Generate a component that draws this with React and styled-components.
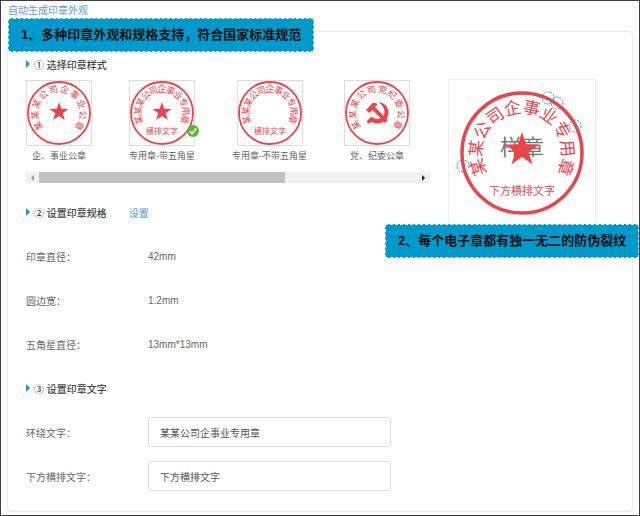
import { useState } from 'react';
import styled, { createGlobalStyle } from 'styled-components';

const RED = '#e9464c';
const CJK = '"Noto Sans CJK SC", sans-serif';

const styles = [
  { id: 'company', name: '企、事业公章', ring: '某某某公司企事业公章', spread: 122, emblem: 'star' },
  { id: 'special-star', name: '专用章-带五角星', ring: '某某某公司企事业专用章', spread: 106, emblem: 'star', bottom: '横排文字' },
  { id: 'special', name: '专用章-不带五角星', ring: '某某某公司企事业专用章', spread: 106, bottom: '横排文字' },
  { id: 'party', name: '党、纪委公章', ring: '某某某公司党纪委公章', spread: 120, emblem: 'party' },
];

const sizes = [
  { label: '印章直径：', value: '42mm' },
  { label: '圆边宽：', value: '1.2mm' },
  { label: '五角星直径：', value: '13mm*13mm' },
];

const starPoints = (cx, cy, r) =>
  Array.from({ length: 10 }, (_, i) => {
    const a = (i * Math.PI) / 5;
    const d = i % 2 ? r * 0.39 : r;
    return `${cx + d * Math.sin(a)},${cy - d * Math.cos(a)}`;
  }).join(' ');

// One text element, every glyph set on the circle and turned outwards
const RingText = ({ text, cx, cy, radius, size, spread }) => {
  const angles = [...text].map((_, i) => -spread + (2 * spread * i) / (text.length - 1));
  const place = (deg) => {
    const a = (deg * Math.PI) / 180;
    const base = radius - size * 0.37;
    return [
      cx + base * Math.sin(a) - (size / 2) * Math.cos(a),
      cy - base * Math.cos(a) - (size / 2) * Math.sin(a),
    ];
  };
  return (
    <text
      x={angles.map((a) => place(a)[0]).join(' ')}
      y={angles.map((a) => place(a)[1]).join(' ')}
      rotate={angles.join(' ')}
      fontSize={size}
      fill={RED}
    >
      {text}
    </text>
  );
};

const PartyEmblem = () => (
  <g fill={RED}>
    <path d="M21 29 L28 21.500 L33 23 L30 26 L43 39 L40 42 L27.500 29 L24.500 32 Z" />
    <path d="M33 21 C41 21.500 45.500 29 42.500 36 C39.500 42.500 31.500 44.500 26.500 40.500 L24 43 L21.500 40.500 L26.500 35.500 C30 39 36 38.500 38.500 34.500 C41 30 38.500 24 33 21 Z" />
  </g>
);

const Seal = ({ ring, spread, emblem, bottom }) => (
  <SealSvg viewBox="0 0 64 64" aria-hidden="true">
    <circle cx="32" cy="32" r="31" fill="none" stroke={RED} strokeWidth="1.800" />
    <RingText text={ring} cx={32} cy={32} radius={24} size={9} spread={spread} />
    {emblem === 'star' && <polygon points={starPoints(32, 31, 10)} fill={RED} />}
    {emblem === 'party' && <PartyEmblem />}
    {bottom && <text x="32" y="53" fontSize="8" textAnchor="middle" fill={RED}>{bottom}</text>}
  </SealSvg>
);

const cracks = [[99, 18], [108, 23], [126, 46], [14, 86]];

const PreviewSeal = ({ ring, bottom }) => (
  <SealSvg viewBox="0 0 146 146" role="img" aria-label="印章预览">
    <text x="73" y="75" fontSize="22" textAnchor="middle" fill="#777">样章</text>
    <circle cx="73" cy="73" r="60" fill="none" stroke={RED} strokeWidth="3.500" />
    <RingText text={ring} cx={73} cy={73} radius={46} size={17} spread={108} />
    <polygon points={starPoints(73, 70, 18)} fill={RED} />
    <text x="73" y="115" fontSize="11" textAnchor="middle" fill={RED}>{bottom}</text>
    {cracks.map(([x, y]) => (
      <circle key={x} cx={x} cy={y} r="6" fill="none" stroke="#1c9dbb" strokeDasharray="2 1" />
    ))}
  </SealSvg>
);

const CheckBadge = () => (
  <Badge viewBox="0 0 12 12" aria-hidden="true">
    <circle cx="6" cy="6" r="6" fill="#5db531" />
    <path d="M2.800 6.300 L5.200 8.500 L9.200 3.500" fill="none" stroke="#fff" strokeWidth="1.700" />
  </Badge>
);

const App = () => {
  const [selected, setSelected] = useState('special-star');
  const [ring, setRing] = useState('某某公司企事业专用章');
  const [bottom, setBottom] = useState('下方横排文字');

  return (
    <Page>
      <GlobalStyle />
      <Title href="#auto">自动生成印章外观</Title>
      <Callout>1、多种印章外观和规格支持，符合国家标准规范</Callout>
      <Panel>
        <Settings>
          <StyleHeading><Arrow />① 选择印章样式</StyleHeading>
          <StyleList>
            {styles.map(({ id, name, ...seal }) => (
              <StyleOption key={id}>
                <HiddenRadio
                  type="radio"
                  name="seal-style"
                  checked={selected === id}
                  onChange={() => setSelected(id)}
                />
                <Thumb>
                  <Seal {...seal} />
                  {selected === id && <CheckBadge />}
                </Thumb>
                {name}
              </StyleOption>
            ))}
          </StyleList>
          <ScrollBar>
            <ScrollButton aria-label="向左"><ScrollArrow $left /></ScrollButton>
            <ScrollThumb />
            <ScrollButton aria-label="向右"><ScrollArrow /></ScrollButton>
          </ScrollBar>

          <Row>
            <Heading><Arrow />② 设置印章规格</Heading>
            <SetLink href="#size">设置</SetLink>
          </Row>
          {sizes.map(({ label, value }) => (
            <Row key={label}>
              <Label as="span">{label}</Label>
              <span>{value}</span>
            </Row>
          ))}

          <Row>
            <Heading><Arrow />③ 设置印章文字</Heading>
          </Row>
          <Row>
            <Label htmlFor="ring">环绕文字：</Label>
            <Input id="ring" value={ring} onChange={(e) => setRing(e.target.value)} />
          </Row>
          <Row>
            <Label htmlFor="bottom">下方横排文字：</Label>
            <Input id="bottom" value={bottom} onChange={(e) => setBottom(e.target.value)} />
          </Row>
        </Settings>

        <Preview>
          <PreviewSeal ring={ring} bottom={bottom} />
          <PreviewCallout>2、每个电子章都有独一无二的防伪裂纹</PreviewCallout>
        </Preview>
      </Panel>
    </Page>
  );
};

const GlobalStyle = createGlobalStyle`
  * {
    box-sizing: border-box;
  }

  body {
    margin: 0;
    background: #fff;
    color: #666;
    font-family: "Liberation Sans", ${CJK};
    font-size: 10px;
  }
`;

const Page = styled.main`
  position: relative;
  display: flex;
  flex-direction: column;
  min-height: 100vh;
  padding: 0 6px 3px;
  border: 1px solid #3e3e42;
`;

const Title = styled.a`
  align-self: flex-start;
  height: 30px;
  padding-left: 1px;
  line-height: 19px;
  color: #5b9bd5;
  text-decoration: none;
`;

const Callout = styled.div`
  position: absolute;
  top: 17px;
  left: 7px;
  padding: 0 12px;
  background: #0099cc;
  border: 1px dashed #fff;
  color: #111;
  font-size: 13px;
  font-weight: bold;
  line-height: 32px;
  white-space: nowrap;
`;

const PreviewCallout = styled(Callout)`
  top: 144px;
  left: -64px;
`;

const Panel = styled.section`
  display: flex;
  flex: 1;
  gap: 18px;
  padding: 21px 18px 12px;
  border: 1px solid #ebebeb;
  border-radius: 4px;
`;

const Settings = styled.div`
  flex: 0 1 404px;
  min-width: 0;
`;

const Heading = styled.h2`
  display: flex;
  align-items: center;
  margin: 0;
  color: #444;
  font-size: 10px;
  font-weight: 500;
`;

const StyleHeading = styled(Heading)`
  height: 22px;
  margin-bottom: 5px;
`;

const Arrow = styled.span`
  margin-right: 4px;
  border: solid transparent;
  border-width: 4px 0 4px 4px;
  border-left-color: #1599c4;
`;

const StyleList = styled.div`
  display: flex;
  gap: 37px;
`;

const StyleOption = styled.label`
  display: flex;
  flex-direction: column;
  align-items: center;
  font-size: 9px;
  line-height: 20px;
  white-space: nowrap;
  cursor: pointer;
`;

const HiddenRadio = styled.input`
  position: absolute;
  margin: 0;
  opacity: 0;
`;

const Thumb = styled.span`
  position: relative;
  width: 66px;
  height: 66px;
  border: 1px solid #ddd;
`;

const SealSvg = styled.svg`
  display: block;
  width: 100%;
  height: 100%;
  font-family: ${CJK};
`;

const Badge = styled.svg`
  position: absolute;
  right: -5px;
  bottom: 8px;
  width: 12px;
  height: 12px;
`;

const ScrollBar = styled.div`
  display: flex;
  height: 11px;
  margin: 6px 0 7px;
  background: #f0f0f0;
`;

const ScrollButton = styled.button`
  display: flex;
  align-items: center;
  justify-content: center;
  width: 13px;
  margin: 0;
  padding: 0;
  background: none;
  border: none;

  &:last-child {
    margin-left: auto;
  }
`;

const ScrollArrow = styled.span`
  border: solid transparent;
  border-width: ${({ $left }) => ($left ? '3px 3px 3px 0' : '3px 0 3px 3px')};
  border-right-color: ${({ $left }) => ($left ? '#999' : 'transparent')};
  border-left-color: ${({ $left }) => ($left ? 'transparent' : '#222')};
`;

const ScrollThumb = styled.div`
  width: 61%;
  background: #c1c1c1;
`;

const Row = styled.div`
  display: flex;
  align-items: center;
  height: 44px;
`;

const SetLink = styled.a`
  margin-left: 22px;
  color: #4a98e0;
  text-decoration: none;
`;

const Label = styled.label`
  flex: 0 0 122px;
`;

const Input = styled.input`
  width: 243px;
  height: 30px;
  padding: 0 11px;
  background: #fff;
  border: 1px solid #ddd;
  border-radius: 3px;
  color: #555;
  font-family: inherit;
  font-size: 10px;
`;

const Preview = styled.div`
  position: relative;
  flex: 0 0 148px;
  height: 148px;
  margin-top: 26px;
  border: 1px solid #eee;
`;

export default App;
